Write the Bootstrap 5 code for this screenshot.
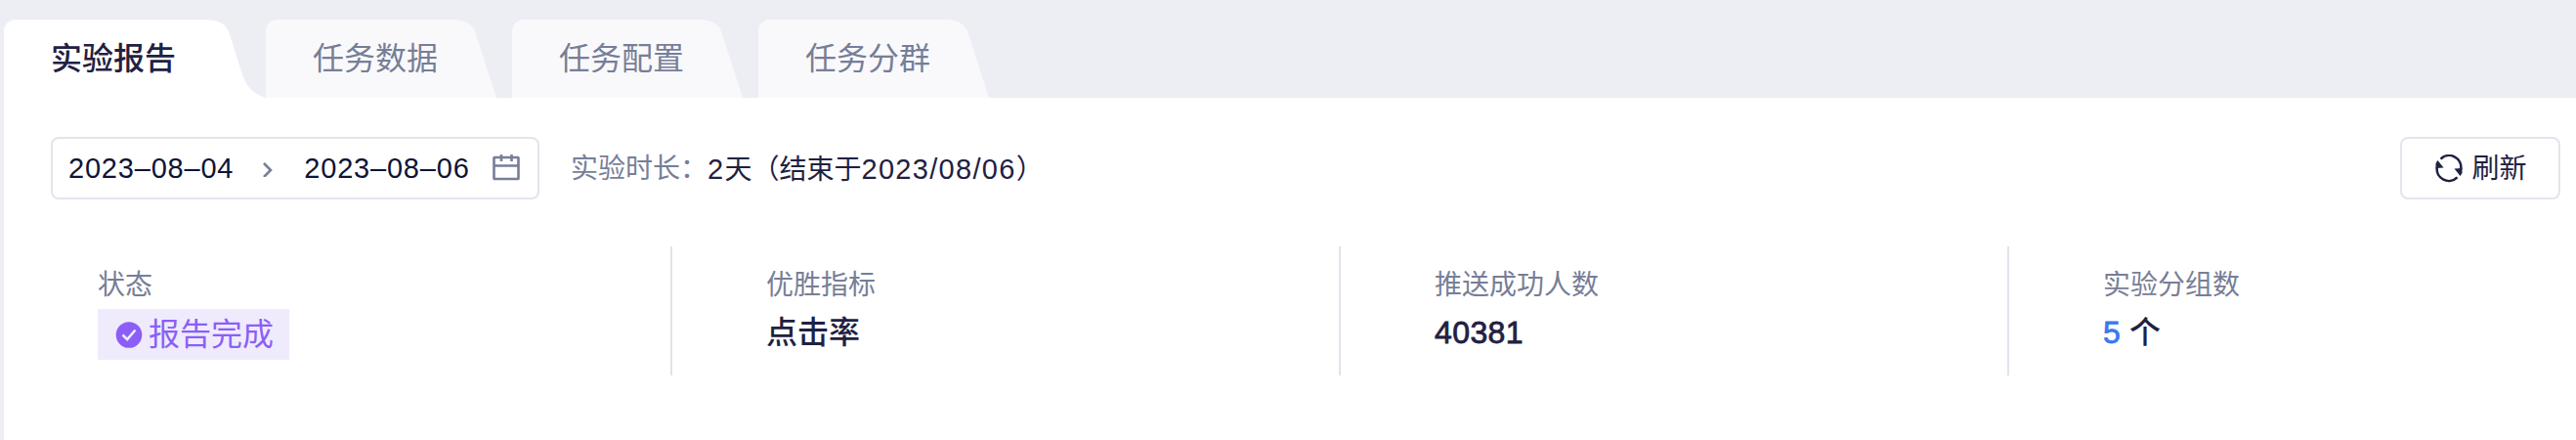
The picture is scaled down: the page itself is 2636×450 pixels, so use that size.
<!DOCTYPE html>
<html lang="zh-CN">
<head>
    <meta charset="UTF-8">
    <meta name="viewport" content="width=device-width, initial-scale=1.0">
    <title>实验报告</title>
    <link href="https://cdn.jsdelivr.net/npm/bootstrap@5.3.0/dist/css/bootstrap.min.css" rel="stylesheet">
    <style>
        body {
            background: #edeef4;
            color: #1f2142;
            font-family: "Liberation Sans", "Noto Sans CJK SC", sans-serif;
            font-size: 28px;
            line-height: 40px;
            overflow: hidden;
        }
        .page { height: 450px; padding: 20px 0 0 4px; }
        .report-tabs { height: 80px; }
        .report-tabs .nav-link {
            padding: 0;
            color: #777e97;
            font-size: 32px;
            margin-right: 16px;
        }
        .report-tabs .nav-link.active { color: #1f2142; font-weight: 500; margin-right: 0; }
        .tab-label {
            height: 80px;
            line-height: 81px;
            padding-left: 48px;
            background: #f9f9fc;
            border-top-left-radius: 12px;
        }
        .tab-tail { fill: #f9f9fc; }
        .active .tab-label { background: #fff; }
        .active .tab-tail { fill: #fff; }
        .panel { height: 350px; padding: 40px 16px 0 0; }
        .toolbar { padding-left: 48px; }
        .date-range {
            width: 500px;
            height: 64px;
            border: 2px solid #e1e5ed;
            border-radius: 8px;
            padding: 0 18px 0 16px;
            color: #0f1437;
        }
        .date-start { margin-right: 29px; }
        .date-end { margin-left: 31px; }
        .digits { font-size: 29px; letter-spacing: .8px; }
        .digits-wide { font-size: 29px; letter-spacing: 1.3px; }
        .duration { padding-top: 2px; }
        .muted-text { color: #777e97; }
        .btn-refresh, .btn-refresh:hover {
            width: 164px;
            height: 64px;
            border: 2px solid #e1e5ed;
            border-radius: 8px;
            background: #fff;
            color: #1f2142;
            font-size: 28px;
            padding: 2px 0 0 1px;
        }
        .stats { margin-top: 48px; }
        .stat-item {
            flex: 0 0 684px;
            height: 132px;
            padding: 20px 0 0 96px;
            border-right: 2px solid #e1e2ec;
        }
        .stat-value { font-size: 32px; font-weight: 500; line-height: 48px; margin-top: 4px; }
        .stat-number { -webkit-text-stroke: .8px currentColor; letter-spacing: .4px; }
        .status-tag {
            height: 52px;
            padding: 0 16px 0 18px;
            gap: 6px;
            background: #efebfd;
            color: #8c5ef8;
            font-size: 32px;
            margin-top: 4px;
        }
        .count-link { color: #3b78f0; }
    </style>
</head>
<body>
    <div class="page">
        <nav class="nav flex-nowrap report-tabs">
            <a class="nav-link active d-flex" href="#">
                <span class="tab-label">实验报告</span>
                <svg class="tab-tail" width="92" height="80"><path d="M0 0H28C42 0 51 4 54 12L65 47C71 67 76 75 92 80H0Z"/></svg>
            </a>
            <a class="nav-link d-flex" href="#">
                <span class="tab-label">任务数据</span>
                <svg class="tab-tail" width="60" height="80"><path d="M0 0H14C27 0 35 4 38 12L60 80H0Z"/></svg>
            </a>
            <a class="nav-link d-flex" href="#">
                <span class="tab-label">任务配置</span>
                <svg class="tab-tail" width="60" height="80"><path d="M0 0H14C27 0 35 4 38 12L60 80H0Z"/></svg>
            </a>
            <a class="nav-link d-flex" href="#">
                <span class="tab-label">任务分群</span>
                <svg class="tab-tail" width="60" height="80"><path d="M0 0H14C27 0 35 4 38 12L60 80H0Z"/></svg>
            </a>
        </nav>

        <div class="panel bg-white overflow-hidden">
            <div class="toolbar d-flex align-items-center">
                <div class="date-range d-flex align-items-center">
                    <span class="digits date-start">2023–08–04</span>
                    <svg width="12" height="18" viewBox="0 0 12 18" fill="none" stroke="#777e97" stroke-width="2.6"><path d="M2 4L9 11L2 18"/></svg>
                    <span class="digits date-end">2023–08–06</span>
                    <svg class="ms-auto" width="28" height="28" viewBox="0 0 28 28" fill="none" stroke="#777e97" stroke-width="2.6"><rect x="1.500" y="3" width="25" height="22" rx=".6"/><path d="M1.500 11.500H26.500M9 0V7M19.500 0V7"/></svg>
                </div>
                <div class="duration d-flex ms-4 ps-2">
                    <span class="muted-text">实验时长：</span>
                    <span><span class="digits-wide">2</span>天（结束于<span class="digits-wide">2023/08/06</span>）</span>
                </div>
                <button type="button" class="btn btn-refresh ms-auto d-flex align-items-center justify-content-center">
                    <svg class="me-2" width="30" height="30" viewBox="0 0 30 30" fill="none" stroke="#1f2142" stroke-width="2.600">
                        <path d="M6.500 4.600A12.200 12.200 0 0 1 27.200 15M23.500 23.400A12.200 12.200 0 0 1 2.800 13"/>
                        <path d="M20.500 14.500L28.500 14V19L26.500 22ZM9.500 13.500L1.500 14V9L3.500 6Z" fill="#1f2142" stroke="none"/>
                    </svg>
                    刷新
                </button>
            </div>

            <div class="stats d-flex flex-nowrap">
                <div class="stat-item">
                    <div class="muted-text">状态</div>
                    <div class="status-tag d-inline-flex align-items-center">
                        <svg width="28" height="28" viewBox="0 0 28 28"><circle cx="14" cy="14.500" r="13.300" fill="#8c5ef8"/><path d="M7.500 14.500L12.200 19.200L20.500 9.500" fill="none" stroke="#efebfd" stroke-width="2.600"/></svg>
                        <span>报告完成</span>
                    </div>
                </div>
                <div class="stat-item">
                    <div class="muted-text">优胜指标</div>
                    <div class="stat-value">点击率</div>
                </div>
                <div class="stat-item">
                    <div class="muted-text">推送成功人数</div>
                    <div class="stat-value"><span class="stat-number">40381</span></div>
                </div>
                <div class="stat-item">
                    <div class="muted-text">实验分组数</div>
                    <div class="stat-value"><span class="stat-number count-link">5</span> 个</div>
                </div>
            </div>
        </div>
    </div>

    <script src="https://cdn.jsdelivr.net/npm/bootstrap@5.3.0/dist/js/bootstrap.bundle.min.js"></script>
</body>
</html>
